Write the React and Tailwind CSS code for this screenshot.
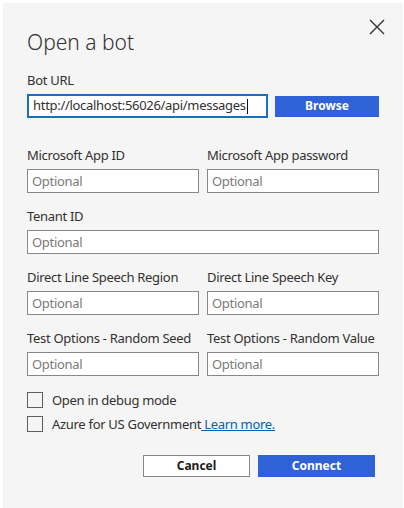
import React from 'react';

const font = { fontFamily: '"Segoe UI", "Noto Sans", "Open Sans", sans-serif' };

const Field = ({ label, className = '' }) => (
  <div className={`flex flex-col ${className}`}>
    <label className="text-[13px] leading-[18px] tracking-[-0.3px] text-[#323130] mb-[5px] whitespace-nowrap">{label}</label>
    <input
      readOnly
      placeholder="Optional"
      className="h-[24px] w-full border border-[#8a8886] bg-white px-[4px] text-[13px] tracking-[-0.3px] text-[#323130] placeholder:text-[#7a7a7a] outline-none"
    />
  </div>
);

const Checkbox = ({ children }) => (
  <div className="flex items-center h-[16px]">
    <span className="w-[16px] h-[16px] border border-[#5f5f5f] bg-[#f5f5f5] shrink-0" />
    <span className="ml-[9px] text-[13px] leading-[16px] tracking-[-0.3px] text-[#323130] whitespace-nowrap">{children}</span>
  </div>
);

export default function App() {
  return (
    <div className="w-[404px] h-[508px] bg-white overflow-hidden" style={font}>
      <div className="ml-[3px] mt-[3px] w-[400px] h-[505px] bg-[#f5f5f5] px-[24px] pt-[24px] relative">
        {/* close button */}
        <button className="absolute top-[13px] right-[15px] w-[22px] h-[22px] flex items-center justify-center">
          <svg width="16" height="16" viewBox="0 0 16 16" fill="none" stroke="#333" strokeWidth="1.4">
            <path d="M1 1 L15 15 M15 1 L1 15" />
          </svg>
        </button>

        <h1 className="text-[21px] leading-[30px] font-light text-[#323130]">Open a bot</h1>

        {/* Bot URL */}
        <div className="mt-[14px]">
          <label className="block text-[13px] leading-[18px] tracking-[-0.3px] text-[#323130] mb-[5px]">Bot URL</label>
          <div className="flex items-center">
            <div className="w-[241px] h-[24px] border-2 border-[#1c6fbf] bg-white flex items-center pl-[4px] text-[13px] tracking-[-0.3px] text-[#323130] whitespace-nowrap overflow-hidden">
              http://localhost:56026/api/messages
              <span className="ml-[1px] w-px h-[15px] bg-[#111]" />
            </div>
            <button className="ml-[7px] w-[104px] h-[21px] bg-[#2f62d6] text-white text-[12px] font-bold">Browse</button>
          </div>
        </div>

        <div className="mt-[28px] grid grid-cols-2 gap-x-[8px] gap-y-[14px]">
          <Field label="Microsoft App ID" />
          <Field label="Microsoft App password" />
          <Field label="Tenant ID" className="col-span-2" />
          <Field label="Direct Line Speech Region" />
          <Field label="Direct Line Speech Key" />
          <Field label="Test Options - Random Seed" />
          <Field label="Test Options - Random Value" />
        </div>

        <div className="mt-[16px] flex flex-col gap-[8px]">
          <Checkbox>Open in debug mode</Checkbox>
          <Checkbox>
            Azure for US Government
            <a className="text-[#0063b1] underline"> Learn more.</a>
          </Checkbox>
        </div>

        <div className="mt-[23px] flex justify-end pr-[4px] gap-[8px]">
          <button className="w-[107px] h-[22px] border border-[#8a8886] bg-white text-[12px] font-bold text-[#1b1b1b]">Cancel</button>
          <button className="w-[117px] h-[22px] bg-[#2f62d6] text-white text-[12px] font-bold">Connect</button>
        </div>
      </div>
    </div>
  );
}
